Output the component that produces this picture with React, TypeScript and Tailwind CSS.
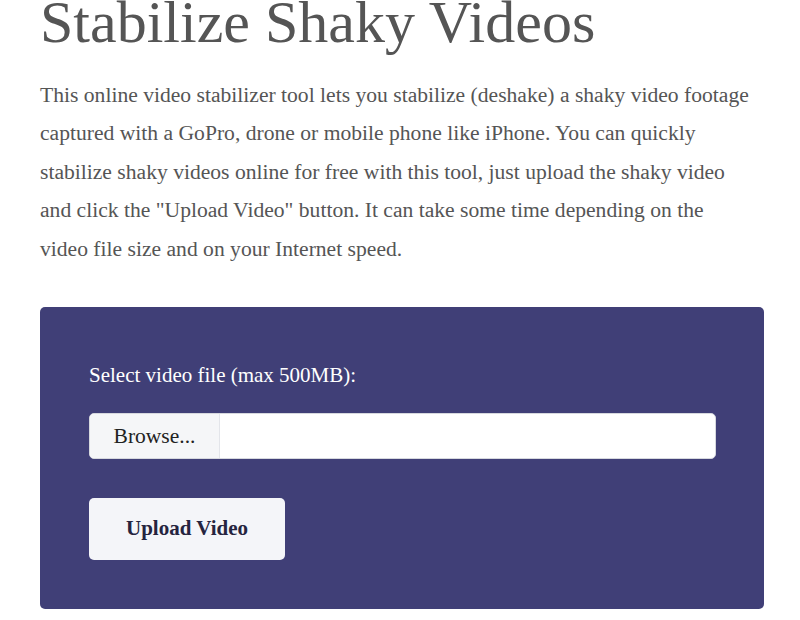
import React from 'react';

const serif = { fontFamily: '"Liberation Serif", "Times New Roman", serif' };

export default function App() {
  return (
    <div className="min-h-screen bg-white" style={serif}>
      <div className="w-[724px] ml-[40px]">
        <h1 className="text-[60px] leading-[1] text-[#555555] -mt-[8px]">Stabilize Shaky Videos</h1>
        <p className="mt-[24px] text-[21.6px] leading-[38.4px] text-[#555555] pr-[12px]">
          This online video stabilizer tool lets you stabilize (deshake) a shaky video footage captured with a GoPro, drone or mobile phone like iPhone. You can quickly stabilize shaky videos online for free with this tool, just upload the shaky video and click the "Upload Video" button. It can take some time depending on the video file size and on your Internet speed.
        </p>

        <div className="mt-[39px] bg-[#403f77] rounded-[5px] pl-[49px] pr-[48px] pt-[54px] pb-[49px]">
          <label className="block text-[21px] leading-[28px] text-white">Select video file (max 500MB):</label>
          <div className="mt-[24px] flex h-[46px] bg-white rounded-[5px] border border-[#d6d8de] overflow-hidden">
            <div className="w-[130px] bg-[#f5f6f8] border-r border-[#e3e5ea] flex items-center justify-center text-[21.5px] text-[#222]">
              Browse...
            </div>
            <div className="flex-1" />
          </div>
          <button className="mt-[39px] w-[196px] h-[62px] bg-[#f4f5f9] rounded-[5px] text-[21px] font-bold text-[#25243f]">
            Upload Video
          </button>
        </div>
      </div>
    </div>
  );
}
